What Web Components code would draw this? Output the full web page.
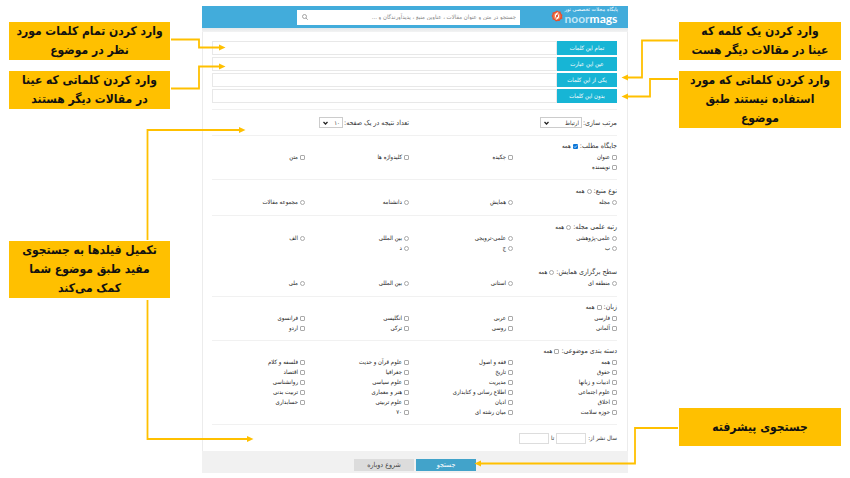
<!DOCTYPE html>
<html lang="fa" dir="rtl">
<head>
<meta charset="utf-8">
<title>نورمگز</title>
<style>
  body {
    margin: 0;
    background: #fff;
    font-family: "DejaVu Sans Condensed", "DejaVu Sans", sans-serif;
    color: #333;
  }
</style>
</head>
<body>

<search-guide>
  <call-out slot="left">وارد کردن تمام کلمات مورد<br>نظر در موضوع</call-out>
  <call-out slot="left">وارد کردن کلماتی که عینا<br>در مقالات دیگر هستند</call-out>
  <call-out slot="left-low">تکمیل فیلدها به جستجوی<br>مفید طبق موضوع شما<br>کمک می‌کند</call-out>

  <search-panel>
    <term-field label="تمام این کلمات"></term-field>
    <term-field label="عین این عبارت"></term-field>
    <term-field label="یکی از این کلمات"></term-field>
    <term-field label="بدون این کلمات"></term-field>

    <pick-list slot="sort" label="مرتب سازی:" value="ارتباط" wide></pick-list>
    <pick-list slot="sort" label="تعداد نتیجه در یک صفحه:" value="۱۰"></pick-list>

    <filter-group slot="filters" label="جایگاه مطلب:" type="checkbox" all-checked options="عنوان|چکیده|کلیدواژه ها|متن|نویسنده"></filter-group>
    <filter-group slot="filters" label="نوع منبع:" type="radio" options="مجله|همایش|دانشنامه|مجموعه مقالات"></filter-group>
    <filter-group slot="filters" label="رتبه علمی مجله:" type="radio" joined options="علمی-پژوهشی|علمی-ترویجی|بین المللی|الف|ب|ج|د"></filter-group>
    <filter-group slot="filters" label="سطح برگزاری همایش:" type="radio" options="منطقه ای|استانی|بین المللی|ملی"></filter-group>
    <filter-group slot="filters" label="زبان:" type="checkbox" options="فارسی|عربی|انگلیسی|فرانسوی|آلمانی|روسی|ترکی|اردو"></filter-group>
    <filter-group slot="filters" label="دسته بندی موضوعی:" type="checkbox" options="همه|فقه و اصول|علوم قرآن و حدیث|فلسفه و کلام|حقوق|تاریخ|جغرافیا|اقتصاد|ادبیات و زبانها|مدیریت|علوم سیاسی|روانشناسی|علوم اجتماعی|اطلاع رسانی و کتابداری|هنر و معماری|تربیت بدنی|اخلاق|ادیان|علوم تربیتی|حسابداری|حوزه سلامت|میان رشته ای|۷۰"></filter-group>
  </search-panel>

  <call-out slot="right">وارد کردن یک کلمه که<br>عینا در مقالات دیگر هست</call-out>
  <call-out slot="right">وارد کردن کلماتی که مورد<br>استفاده نیستند طبق<br>موضوع</call-out>
  <call-out slot="right-low">جستجوی پیشرفته</call-out>
</search-guide>

<script>
class SearchGuide extends HTMLElement {
  constructor() {
    super();
    this.attachShadow({mode: 'open'}).innerHTML = `
      <style>
        :host {
          display: grid;
          position: relative;
          direction: ltr;
          grid-template-columns:
            minmax(0, 161fr) minmax(0, 32fr) minmax(0, 426fr) minmax(0, 51fr) minmax(0, 162fr);
          padding: 6px 9px;
        }
        .left, .right {
          display: flex;
          flex-direction: column;
          gap: 11px;
          padding-top: 16px;
        }
        .left { grid-column: 1; }
        .center { grid-column: 3; }
        .right { grid-column: 5; }
        .left .low { margin-top: 121px; }
        .right .low { margin-top: 269px; }
        svg {
          position: absolute;
          left: 0;
          top: 0;
          width: 100%;
          height: 478px;
          pointer-events: none;
        }
      </style>
      <div class="left">
        <slot name="left"></slot>
        <div class="low"><slot name="left-low"></slot></div>
      </div>
      <div class="center"><slot></slot></div>
      <div class="right">
        <slot name="right"></slot>
        <div class="low"><slot name="right-low"></slot></div>
      </div>
      <svg viewBox="0 0 850 478" preserveAspectRatio="none" fill="none" stroke="#ffc000" stroke-width="1.8">
        <defs>
          <marker id="tip" markerUnits="userSpaceOnUse" markerWidth="7" markerHeight="7" refX="1" refY="3.5" orient="auto">
            <path d="M0 .5 L6.5 3.5 L0 6.5 Z" fill="#ffc000" stroke="none"/>
          </marker>
        </defs>
        <path marker-end="url(#tip)" d="M171 39.5H199V47.5H220"/>
        <path marker-end="url(#tip)" d="M171 88.5H199V66.5H220"/>
        <path marker-end="url(#tip)" d="M147.5 240V130H240"/>
        <path marker-end="url(#tip)" d="M147.5 300V439H248"/>
        <path marker-end="url(#tip)" d="M678 40.5H642V77.5H627"/>
        <path marker-end="url(#tip)" d="M678 79H650V96.5H627"/>
        <path marker-end="url(#tip)" d="M678 428H635V463.5H480"/>
      </svg>`;
  }
}

class CallOut extends HTMLElement {
  constructor() {
    super();
    this.attachShadow({mode: 'open'}).innerHTML = `
      <style>
        :host {
          display: flex;
          align-items: center;
          justify-content: center;
          direction: rtl;
          min-height: 38px;
          background: #ffc000;
          color: #111;
          font-size: 12px;
          font-weight: bold;
          line-height: 19px;
          text-align: center;
          white-space: nowrap;
        }
      </style>
      <div><slot></slot></div>`;
  }
}

class SearchPanel extends HTMLElement {
  constructor() {
    super();
    this.attachShadow({mode: 'open'}).innerHTML = `
      <style>
        :host {
          display: block;
          direction: rtl;
          font-size: 7px;
          line-height: 10px;
        }
        header {
          display: flex;
          align-items: center;
          justify-content: space-between;
          height: 22px;
          padding: 0 10px 0 95px;
          background: #42acdb;
        }
        .logo {
          display: flex;
          align-self: flex-start;
          align-items: center;
          direction: ltr;
          gap: 2px;
          color: #fff;
          text-decoration: none;
        }
        .logo svg { width: 12px; height: 12px; }
        .logo small {
          display: block;
          direction: rtl;
          font: 5px/6px "DejaVu Sans", sans-serif;
          white-space: nowrap;
        }
        .logo b {
          display: block;
          font: bold 12px/14px Lato, sans-serif;
        }
        .logo i { font-style: normal; color: #bfe6f7; }
        .search {
          display: flex;
          align-items: center;
          flex: 0 1 223px;
          height: 15px;
          padding: 0 4px 0 5px;
          box-sizing: border-box;
          background: #fff;
        }
        .search input {
          flex: 1;
          min-width: 0;
          padding: 0;
          border: 0;
          background: none;
          font: inherit;
          font-size: 6px;
        }
        .search input::placeholder { color: #888; opacity: 1; }
        .search button { display: flex; padding: 0; border: 0; background: none; }
        .search svg { width: 6px; height: 6px; }
        .body {
          border: solid #ececec;
          border-width: 0 1px;
          padding: 0 10px 0 9px;
        }
        .shade {
          height: 4px;
          background: linear-gradient(#e4e8ea, #f3f3f3);
        }
        .terms {
          display: grid;
          gap: 2px;
          padding: 9px 0 6px;
          border-bottom: 1px solid #f1f1f1;
        }
        .sort {
          display: grid;
          grid-template-columns: 208fr 197fr;
          align-items: center;
          height: 25px;
          border-bottom: 1px solid #f1f1f1;
        }
        .years {
          display: flex;
          align-items: center;
          gap: 2px;
          height: 26px;
          font-size: 6px;
        }
        .years input {
          width: 30px;
          height: 11px;
          box-sizing: border-box;
          border: 1px solid #ddd;
          padding: 0 2px;
          font: inherit;
        }
        footer {
          display: flex;
          justify-content: center;
          gap: 2px;
          height: 22px;
          padding-top: 8px;
          box-sizing: border-box;
          background: #f1f1f1;
        }
        footer button {
          width: 60px;
          height: 12px;
          padding: 0;
          border: 0;
          background: #dcdcdc;
          color: #444;
          font: inherit;
        }
        footer button[type=submit] { background: #42a3ca; color: #fff; }
      </style>
      <header>
        <a class="logo" href="#">
          <svg viewBox="0 0 24 24">
            <path fill="#e5502f" d="M12 1l3 2 4 0 1 4 3 3-1 3 1 4-4 2-2 3-4 0-3 1-3-3-4-1 0-4-2-3 2-3 0-4 4-1z"/>
            <circle cx="12" cy="12" r="7" fill="#f4895a"/>
            <path fill="#fff" d="M15 4c-5 2-8 5-7 9l2 3c0-4 2-7 5-12z"/>
            <path fill="#fff" d="M9 20c5-2 8-5 7-9l-2-3c0 4-2 7-5 12z"/>
            <circle cx="12" cy="12" r="2" fill="#d8372a"/>
          </svg>
          <span><small>پایگاه مجلات تخصصی نور</small><b><i>noor</i>mags</b></span>
        </a>
        <div class="search">
          <input type="search" aria-label="جستجو" placeholder="جستجو در متن و عنوان مقالات ، عناوین منبع ، پدیدآورندگان و ...">
          <button type="button" aria-label="جستجو">
            <svg viewBox="0 0 12 12" fill="none" stroke="#888" stroke-width="1.5">
              <circle cx="5" cy="5" r="4"/><path d="M8 8l3.5 3.5"/>
            </svg>
          </button>
        </div>
      </header>
      <div class="shade"></div>
      <div class="body">
        <div class="terms"><slot></slot></div>
        <div class="sort"><slot name="sort"></slot></div>
        <slot name="filters"></slot>
        <div class="years">
          <label for="from">سال نشر از:</label><input id="from" type="text">
          <label for="to">تا</label><input id="to" type="text">
        </div>
      </div>
      <footer>
        <button type="submit">جستجو</button>
        <button type="reset">شروع دوباره</button>
      </footer>`;
  }
}

class TermField extends HTMLElement {
  connectedCallback() {
    this.attachShadow({mode: 'open'}).innerHTML = `
      <style>
        :host { display: flex; height: 14px; }
        label {
          flex: 0 0 60px;
          background: #17b5d5;
          color: #fff;
          font-size: 6px;
          line-height: 14px;
          text-align: center;
        }
        input {
          flex: 1;
          min-width: 0;
          box-sizing: border-box;
          padding: 0 4px;
          border: 1px solid #e8e8e8;
          background: #fff;
          font: inherit;
        }
      </style>
      <label for="term">${this.getAttribute('label')}</label><input id="term" type="text">`;
  }
}

class PickList extends HTMLElement {
  connectedCallback() {
    this.attachShadow({mode: 'open'}).innerHTML = `
      <style>
        :host { display: flex; align-items: center; gap: 1px; white-space: nowrap; }
        .box { display: grid; align-items: center; width: 24px; }
        :host([wide]) .box { width: 42px; }
        select, svg { grid-area: 1 / 1; }
        select {
          appearance: none;
          width: 100%;
          height: 11px;
          padding: 0 2px;
          border: 1px solid #ccc;
          border-radius: 0;
          background: #fff;
          color: inherit;
          font: inherit;
          font-size: 6px;
          line-height: 9px;
        }
        svg {
          justify-self: end;
          width: 5px;
          height: 4px;
          margin-left: 4px;
          pointer-events: none;
        }
      </style>
      <label for="pick">${this.getAttribute('label')}</label>
      <span class="box">
        <select id="pick"><option>${this.getAttribute('value')}</option></select>
        <svg viewBox="0 0 10 8" fill="none" stroke="#222" stroke-width="2.5"><path d="M1 2l4 4 4-4"/></svg>
      </span>`;
  }
}

class FilterGroup extends HTMLElement {
  connectedCallback() {
    const type = this.getAttribute('type');
    const option = (text, checked) =>
      `<label><input type="${type}" name="choice" ${checked ? 'checked' : ''}><span>${text}</span></label>`;

    this.attachShadow({mode: 'open'}).innerHTML = `
      <style>
        :host {
          display: block;
          padding: 5px 0 7px;
          border-bottom: 1px solid #f1f1f1;
        }
        :host([type=radio]) { padding: 6px 0 8px; }
        :host([joined]) { border-bottom: 0; }
        .title { display: flex; gap: 2px; margin-bottom: 1px; }
        .options { display: grid; grid-template-columns: repeat(3, 104fr) 93fr; }
        label {
          display: flex;
          align-items: center;
          gap: 2px;
          height: 10px;
          color: #222;
          font-size: 6px;
          white-space: nowrap;
        }
        input {
          appearance: none;
          flex: none;
          width: 5px;
          height: 5px;
          margin: 0;
          border: 1px solid #aaa;
          border-radius: 1px;
          box-sizing: border-box;
          background: #fff;
        }
        input[type=radio] { border-radius: 50%; }
        input:checked {
          border: 0;
          background: #0b76d8 url("data:image/svg+xml,%3Csvg xmlns='http://www.w3.org/2000/svg' viewBox='0 0 10 10'%3E%3Cpath d='M2 5l2 2 4-4' fill='none' stroke='white' stroke-width='1.5'/%3E%3C/svg%3E");
        }
      </style>
      <div class="title"><span>${this.getAttribute('label')}</span>${option('همه', this.hasAttribute('all-checked'))}</div>
      <div class="options">${this.getAttribute('options').split('|').map(text => option(text)).join('')}</div>`;
  }
}

customElements.define('search-guide', SearchGuide);
customElements.define('call-out', CallOut);
customElements.define('search-panel', SearchPanel);
customElements.define('term-field', TermField);
customElements.define('pick-list', PickList);
customElements.define('filter-group', FilterGroup);
</script>
</body>
</html>
